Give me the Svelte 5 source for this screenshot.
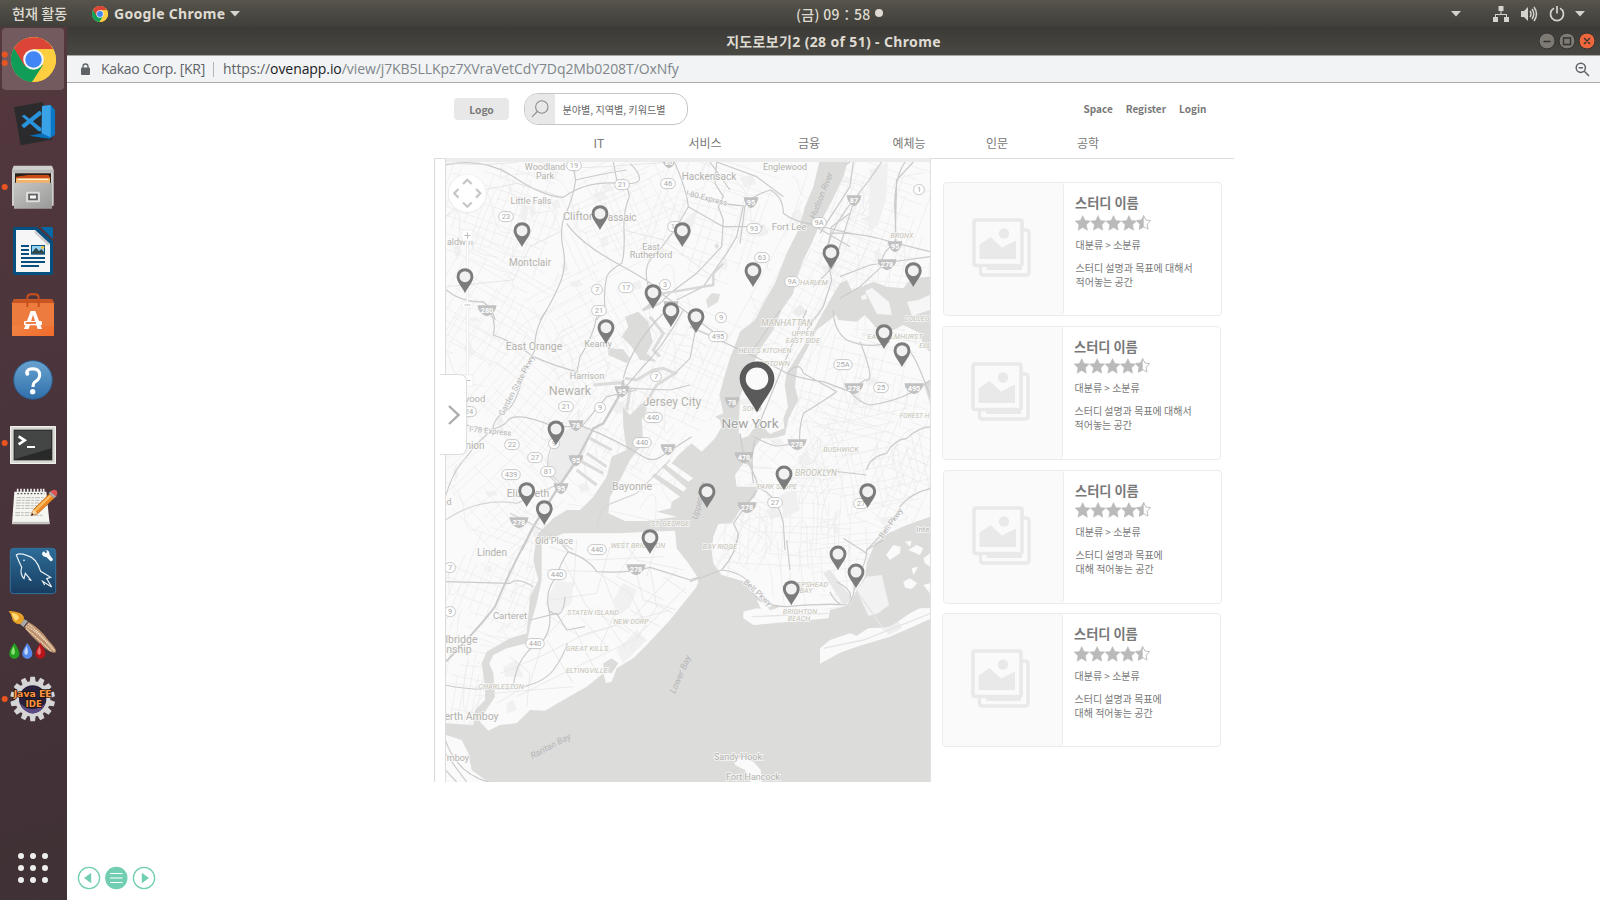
<script>
  // Deterministic street grid for the base map
  let seed = 11;
  const rnd = () => ((seed = (seed * 16807) % 2147483647) / 2147483647);
  const districts = [
    [500, 210, 130, 110, 20], [620, 215, 120, 110, -25], [710, 220, 110, 120, 18],
    [490, 310, 110, 120, 30], [590, 330, 110, 110, 62], [520, 400, 130, 110, 40],
    [625, 430, 110, 100, 30], [690, 370, 90, 120, 24], [500, 490, 120, 100, 48],
    [590, 560, 120, 100, 12], [500, 590, 110, 110, 22], [640, 600, 120, 110, 42],
    [560, 660, 110, 90, 60], [480, 690, 70, 110, 10], [800, 300, 90, 190, 28],
    [860, 220, 130, 140, 20], [900, 300, 90, 90, 5], [860, 380, 130, 120, 14],
    [800, 440, 110, 90, 40], [870, 460, 120, 110, -12], [790, 520, 130, 110, 3],
    [830, 570, 120, 90, -6], [740, 540, 60, 90, 30], [905, 470, 70, 140, 25]
  ];
  const streets = districts.map(([x, y, w, h, a]) => {
    let d = '';
    for (let u = -w / 2; u < w / 2; u += 5 + rnd() * 8) {
      const s = -h / 2 * rnd(), e = h / 2 * (.4 + rnd() * .6), k = rnd() * 6 - 3;
      d += `M${u.toFixed(1)} ${s.toFixed(1)}Q${(u + k).toFixed(1)} 0 ${(u + k / 2).toFixed(1)} ${e.toFixed(1)}`;
    }
    for (let v = -h / 2; v < h / 2; v += 5 + rnd() * 9) {
      const s = -w / 2 * rnd(), e = w / 2 * (.4 + rnd() * .6), k = rnd() * 8 - 4;
      d += `M${s.toFixed(1)} ${v.toFixed(1)}Q0 ${(v + k).toFixed(1)} ${e.toFixed(1)} ${(v + k / 2).toFixed(1)}`;
    }
    return { d, t: `translate(${x} ${y}) rotate(${a})` };
  });
  const lanes = Array.from({ length: 130 }, () => {
    const x = 440 + rnd() * 490, y = 155 + rnd() * 560, a = rnd() * 80 - 40, b = rnd() * 80 - 40;
    return `M${x.toFixed(1)} ${y.toFixed(1)}q${(a * .9).toFixed(1)} ${(b * .2).toFixed(1)} ${a.toFixed(1)} ${b.toFixed(1)}t${(b * .5).toFixed(1)} ${(a * .6).toFixed(1)}`;
  }).join('');
  const parks = Array.from({ length: 60 }, () => {
    const x = 446 + rnd() * 480, y = 165 + rnd() * 520, w = 3 + rnd() * 9, h = 3 + rnd() * 10;
    return `M${x.toFixed(1)} ${y.toFixed(1)}l${w.toFixed(1)} ${(-h * .4).toFixed(1)}l${(w * .4).toFixed(1)} ${h.toFixed(1)}l${(-w).toFixed(1)} ${(h * .4).toFixed(1)}z`;
  }).join('');

  // [text, x, y (baseline), size, kind, rotation]
  const places = [
    ['Woodland', 545, 169, 9], ['Park', 545, 178, 9], ['Little Falls', 531, 203, 9], ['Hackensack', 709, 179, 10],
    ['Englewood', 785, 169, 9], ['Clifton', 579, 219, 11], ['Passaic', 619, 220, 10], ['Montclair', 530, 265, 10],
    ['East', 651, 249, 9], ['Rutherford', 651, 257, 9], ['Fort Lee', 789, 229, 9.5], ['aldwin', 460, 244, 9],
    ['East Orange', 534, 349, 10.5], ['Kearny', 598, 346, 9], ['Harrison', 587, 378, 9], ['Newark', 570, 394, 12.5],
    ['Jersey City', 672, 405, 12], ['vood', 475, 401, 9.5], ['nion', 475, 448, 10], ['Elizabeth', 528, 496, 10.5],
    ['Bayonne', 632, 489, 10.5], ['Old Place', 554, 543, 9], ['d', 449, 504, 9], ['Linden', 492, 555, 10], ['Carteret', 510, 618, 9.5],
    ['lbridge', 461.5, 642, 10.5], ['nship', 459, 652, 10.5], ['erth Amboy', 471.5, 719, 10.5], ['mboy', 458, 760, 9],
    ['New York', 750, 427, 13.5, 'city'], ['Sandy Hook', 738, 759, 9], ['Fort Hancock', 753, 779, 9],
    ['MANHATTAN', 787, 325, 8.5, 'area'], ['UPPER', 803, 335, 7.2, 'area'], ['EAST SIDE', 803, 342, 7.2, 'area'],
    ["HELL'S KITCHEN", 765, 352, 7, 'area'], ['MIDTOWN', 773, 365, 7.2, 'area'], ['SOHO', 752, 410, 7, 'area'], ['HARLEM', 814, 284, 7, 'area'],
    ['BRONX', 902, 237, 7, 'area'], ['COLLEG', 917, 320, 6.8, 'area'], ['EAST ELMHURST', 895, 338, 7, 'area'], ['ELL', 925, 347, 7, 'area'],
    ['FOREST H', 914.5, 417, 6.4, 'area'], ['BUSHWICK', 841, 451, 7, 'area'], ['BROOKLYN', 816, 475, 8.5, 'area'],
    ['PARK SLOPE', 777, 488, 7, 'area'], ['BAY RIDGE', 720, 548, 7, 'area'], ['SHEEPSHEAD', 806, 586, 7, 'area'],
    ['BAY', 806, 592.5, 7, 'area'], ['BRIGHTON', 800, 613, 7, 'area'], ['BEACH', 799, 620, 7, 'area'],
    ['ST. GEORGE', 670, 525, 7, 'area'], ['WEST BRIGHTON', 638, 547, 7, 'area'], ['STATEN ISLAND', 593, 614, 7, 'area'],
    ['NEW DORP', 631, 623, 7, 'area'], ['GREAT KILLS', 587, 650, 7.2, 'area'], ['ELTINGVILLE', 587, 672, 7.2, 'area'],
    ['CHARLESTON', 501, 688, 7.2, 'area'],
    ['Hudson River', 824, 196, 8.5, 'sea', -68], ['Upper Bay', 702, 501, 8.5, 'sea', -76], ['Lower Bay', 683, 675, 9, 'sea', -66],
    ['Raritan Bay', 552, 748, 9, 'sea', -28], ['Garden State Pkwy', 519, 386, 8, 'road', -62], ['I-78 Express', 490, 433, 7.8, 'road', 6],
    ['I-80 Express', 706, 200, 7.8, 'road', 14], ['Belt Pkwy', 756, 594, 8, 'road', 42], ['Belt Pkwy', 893, 524, 8, 'road', -54],
    ['Inte', 923, 531, 8, 'road']
  ];
  const shields = [
    ['19', 574, 165], ['21', 622, 184], ['46', 668, 183], ['23', 506, 216], ['17', 675, 226], ['93', 754, 228], ['63', 762, 257],
    ['9A', 819, 222], ['9A', 792, 281], ['7', 597, 289], ['17', 626, 287], ['3', 665, 284], ['21', 599, 310], ['9', 721, 317],
    ['495', 718, 336], ['1', 919, 189], ['7', 656, 376], ['21', 566, 406], ['9', 600, 407], ['440', 653, 417], ['440', 642, 442],
    ['22', 512, 444], ['27', 535, 457], ['9', 554, 443], ['81', 548, 471], ['439', 511, 474], ['24', 469, 411], ['440', 597, 549],
    ['440', 557, 574], ['440', 535, 643], ['7', 450, 567], ['9', 450, 611], ['25A', 843, 364], ['25', 881, 387], ['27', 775, 502], ['27', 861, 503]
  ];
  const interstates = [
    ['280', 487, 310], ['95', 751, 202], ['80', 669, 162], ['95', 671, 306], ['87', 854, 200], ['95', 895, 246], ['278', 887, 264],
    ['95', 622, 391], ['78', 556, 427], ['78', 576, 425], ['95', 576, 460], ['95', 561, 488], ['78', 668, 449], ['278', 519, 522], ['278', 636, 569],
    ['78', 732, 402], ['278', 854, 388], ['495', 914, 388], ['278', 797, 444], ['478', 744, 457], ['278', 747, 507]
  ];
  const pins = [
    [522, 245.7], [600, 228.7], [682.3, 245.7], [753, 285.7], [831, 267.7], [465, 291.7], [653, 307.7], [671, 325.7],
    [696, 331.7], [606, 342.7], [913.3, 285.7], [884, 347.7], [902, 365.7], [556, 444], [526.7, 505.7], [544.3, 523.7],
    [784, 489], [707, 506.7], [867.7, 506.7], [650, 552.7], [791.3, 604], [838, 569], [856, 587]
  ];
  const cards = [
    { shift: 1, lines: ['스터디 설명과 목표에 대해서', '적어놓는 공간'] },
    { shift: 0, lines: ['스터디 설명과 목표에 대해서', '적어놓는 공간'] },
    { shift: 1, lines: ['스터디 설명과 목표에', '대해 적어놓는 공간'] },
    { shift: 0, lines: ['스터디 설명과 목표에', '대해 적어놓는 공간'] }
  ];
  const star = 'M7.5 0 9.8 4.800 15 5.500 11.200 9.200 12.200 14.600 7.500 12 2.800 14.600 3.800 9.200 0 5.500 5.200 4.800Z';
  const cogTeeth = Array.from({ length: 14 }, (_, i) => i * 360 / 14);
</script>

{#snippet chrome(size)}
  <svg width={size} height={size} viewBox="0 0 48 48">
    <circle cx="24" cy="24" r="24" fill="#fdce3f" />
    <path d="M3.2 12A24 24 0 0 0 22.5 48L34 30 24 24H14Z" fill="#109d58" />
    <path d="M3.2 12 14.500 31 24 24V13H45A24 24 0 0 0 3.200 12Z" fill="#dc4437" />
    <path d="M45.200 13H24L34.500 30 22.500 48A24 24 0 0 0 45.200 13Z" fill="#fdce3f" />
    <circle cx="24" cy="24" r="11" fill="#f2f4f6" /><circle cx="24" cy="24" r="8.800" fill="#4285f4" />
  </svg>
{/snippet}

{#snippet caret()}
  <svg width="10" height="6" viewBox="0 0 10 6"><path d="M0 0H10L5 5.500Z" fill="#d5d3ce" /></svg>
{/snippet}

<div class="screen">
  <header class="panel">
    <span class="activities">현재 활동</span>
    <span class="appmenu">{@render chrome(16)}<b>Google Chrome</b>{@render caret()}</span>
    <span class="clock"><span>(금) 09：58</span><i></i></span>
    <span class="tray">
      {@render caret()}
      <svg class="net" width="16" height="16" viewBox="0 0 16 16" fill="#d5d3ce"><path d="M5.5 0h5v5h-5zM0 11h5v5H0zM11 11h5v5h-5zM7.500 5h1v3H14v3h-1V9H3v2H2V8h5.500z" /></svg>
      <svg class="vol" width="17" height="16" viewBox="0 0 17 16"><path d="M0 5H3L7 1V15L3 11H0Z" fill="#d5d3ce" /><path d="M9 5Q11 8 9 11M11 3Q14.500 8 11 13M13 1Q18 8 13 15" fill="none" stroke="#d5d3ce" stroke-width="1.500" /></svg>
      <svg class="pow" width="16" height="16" viewBox="0 0 16 16" fill="none" stroke="#d5d3ce" stroke-width="1.700"><path d="M5 2.300A6.500 6.500 0 1 0 11 2.300M8 0V7.500" /></svg>
      {@render caret()}
    </span>
  </header>

  <div class="desk">
    <aside class="dock">
      <div class="slot active">{@render chrome(45)}</div>
      <div class="slot">
        <svg width="67" height="64" viewBox="0 211 201 192"><path d="M42 260 128 244 156 357 62 374Z" fill="#2b2b2d" /><path d="M126 256 152 253 165 268V342L147 355 125 346Z" fill="#0b78c6" /><path d="M126 256 152 253V350L125 338Z" fill="#3aa3e8" /><path d="M88 345 125 338 150 352 135 353Z" fill="#0a70bb" /><path d="M65 286 73 282 124 322V332H116ZM64 314 118 270 124 274V282L72 323Z" fill="#2994dc" /></svg>
      </div>
      <div class="slot">
        <svg width="67" height="64" viewBox="0 403 201 192"><defs><linearGradient id="cab" x2="1" y2="1"><stop stop-color="#c6c6c4" /><stop offset="1" stop-color="#999" /></linearGradient></defs><path d="M41 435H156L161 448V555H36V448Z" fill="#cfcfcd" /><path d="M38 447H160V456H38Z" fill="#b9b9b7" /><path d="M45 458H153V490H45Z" fill="#2c211b" /><path d="M48 468 85 463H145L150 470V490H48Z" fill="#cb4b16" /><path d="M48 473H150V490H48Z" fill="#f3b368" /><path d="M53 474H145V478H53Z" fill="#fff0d8" /><path d="M42 486H156V564H42Z" fill="url(#cab)" /><rect x="78" y="513" width="42" height="32" rx="5" fill="#dededc" /><rect x="84" y="519" width="30" height="20" fill="#777" /><rect x="88" y="523" width="22" height="12" fill="#f7f7f7" stroke="#333" stroke-width="2" /></svg>
      </div>
      <div class="slot">
        <svg width="67" height="64" viewBox="0 597 201 192"><path d="M44 621H110L159 664V760Q159 765 154 765H44Q39 765 39 760V626Q39 621 44 621Z" fill="#05507f" /><path d="M122 621H155Q159 621 159 626V657Z" fill="#0768a6" /><path d="M48 630H105L150 672V756H48Z" fill="#f6f6f6" /><path d="M105 630 150 672 143 676 103 638Z" fill="#ccc" /><path d="M63 678H87M63 690H87M63 702H87M63 714H135M63 726H135M63 738H117" stroke="#05507f" stroke-width="6" /><rect x="93" y="675" width="42" height="29" fill="#05507f" /><path d="M96 678H132V700H96Z" fill="#91d4f5" /><path d="M96 697 108 683 117 693 124 687 132 696V701H96Z" fill="#31474e" /><circle cx="128" cy="682" r="5" fill="#f0c23a" /></svg>
      </div>
      <div class="slot">
        <svg width="67" height="64" viewBox="0 789 201 192"><defs><linearGradient id="bag" y2="1"><stop stop-color="#ef9152" /><stop offset="1" stop-color="#f16b2c" /></linearGradient></defs><path d="M42 838H156L162 850V948H36V850Z" fill="url(#bag)" /><path d="M36 850 42 838H156L162 850Z" fill="#c9541f" /><path d="M36 850H162V918H36Z" fill="#ee7b3e" /><path d="M82 861V834Q82 823 93 823H105Q116 823 116 834V861" fill="none" stroke="#c94f1c" stroke-width="6" /><path d="M92 873H106L126 927H113L99 884 86 927H72Z" fill="#fff" /><rect x="72" y="903" width="54" height="13" rx="4" fill="#fff" /><path d="M77 909H108" stroke="#e96526" stroke-width="5" /></svg>
      </div>
      <div class="slot">
        <svg width="67" height="64" viewBox="0 21 201 192"><defs><linearGradient id="hlp" x2="0" y2="1"><stop stop-color="#69a3cf" /><stop offset="1" stop-color="#2f6fab" /></linearGradient></defs><circle cx="99" cy="120" r="58" fill="url(#hlp)" stroke="#2b5d8e" stroke-width="3" /><path d="M79 99Q82 86 99 86 119 87 119 104 119 117 107 124 99 129 99 141" fill="none" stroke="#fff" stroke-width="9" /><circle cx="82" cy="101" r="6" fill="#fff" /><circle cx="98" cy="155" r="8" fill="#fff" /></svg>
      </div>
      <div class="slot">
        <svg width="67" height="64" viewBox="0 213 201 192"><rect x="30" y="258" width="138" height="114" rx="3" fill="#d5d5d0" /><rect x="32" y="260" width="134" height="110" fill="none" stroke="#f6f6f3" stroke-width="3" /><rect x="41" y="269" width="116" height="92" fill="#282a29" /><path d="M44 272H154V325L44 358Z" fill="#444645" /><path d="M56 289 74 301 56 313" fill="none" stroke="#fff" stroke-width="8" /><path d="M81 321H105" stroke="#fff" stroke-width="6" /></svg>
      </div>
      <div class="slot">
        <svg width="67" height="64" viewBox="0 405 201 192"><path d="M43 455H139L149 552H36Z" fill="#f5f5f1" /><path d="M37 545H148V553H37Z" fill="#c5c5bf" /><path d="M50 473H133M49 481H125M48 489H120M48 497H111M47 505H107M46 518H95M46 526H128" stroke="#9b9b98" stroke-width="2" stroke-dasharray="14 3 8 3" /><path d="M53 446V460M63 446V460M73 446V460M83 446V460M93 446V460M103 446V460M113 446V460M123 446V460M131 446V460" stroke="#eee" stroke-width="5" /><path d="M52 461H133" stroke="#555" stroke-width="4" stroke-dasharray="5 5" /><path d="M93 527 101 508 149 461 163 474 113 521Z" fill="#ee8b24" stroke="#a95812" stroke-width="2" /><path d="M103 510 149 465 154 469 106 516Z" fill="#fbc067" /><path d="M93 527 101 508 112 520Z" fill="#f5d8a6" /><path d="M93 527 96 519 101 524Z" fill="#222" /><path d="M146 459 154 452 170 468 162 475Z" fill="#aaa" /><path d="M151 455Q161 445 170 452 175 461 167 469Z" fill="#dc5555" /></svg>
      </div>
      <div class="slot">
        <svg width="67" height="64" viewBox="0 597 201 192"><defs><linearGradient id="sql" x2="0" y2="1"><stop stop-color="#2d6c99" /><stop offset="1" stop-color="#183d60" /></linearGradient></defs><rect x="31" y="625" width="136" height="136" rx="10" fill="url(#sql)" stroke="#34719c" stroke-width="3" /><path d="M94 722 76 700 72 716Q59 702 65 682 54 658 49 645 57 638 80 646 109 652 122 694L152 712 140 716 155 741 128 724 134 735M94 722 86 717" fill="none" stroke="#e8f0f5" stroke-width="3.500" /><circle cx="72" cy="661" r="2.500" fill="#fff" /><path d="M126 643Q126 635 132 634L137 640 142 636 137 631Q148 630 149 644L159 658Q158 665 151 663L139 651Q129 653 126 643Z" fill="#f7fafc" /></svg>
      </div>
      <div class="slot">
        <svg width="67" height="64" viewBox="0 789 201 192"><path d="M26 813Q39 812 59 819 76 827 71 842L61 853Q37 851 36 833 33 821 26 813Z" fill="#e7a128" /><path d="M35 818Q56 822 57 835L48 843Q40 838 35 818Z" fill="#ffdc75" /><path d="M61 853 73 838 84 844 70 861Z" fill="#a8a9a7" /><path d="M73 862 86 846Q124 868 145 901 173 929 167 937 158 942 134 924 91 888 73 862Z" fill="#b98e6a" /><path d="M78 858Q118 877 161 932M84 851Q123 880 165 934M78 866Q108 890 153 934" fill="none" stroke="#f1d9bd" stroke-width="4" stroke-dasharray="4 2" />
          {#each [[43, '#25a020', '#8de276'], [82, '#5688ea', '#c0d8ff'], [121, '#b5151b', '#ef7068']] as [x, a, b]}<path d="M{x} 909Q{x + 30} 950 {x} 957 {x - 30} 950 {x} 909Z" fill={a} /><path d="M{x - 2} 919Q{x - 16} 942 {x - 3} 945 {x + 6} 940 {x - 2} 919Z" fill={b} />{/each}</svg>
      </div>
      <div class="slot">
        <svg width="67" height="64" viewBox="0 981 201 192">{#each cogTeeth as a}<path d="M89 1026 91 1010H105L107 1026Z" fill="#d5d5d5" transform="rotate({a} 98 1077)" />{/each}<circle cx="98" cy="1077" r="47" fill="#29213b" stroke="#d5d5d5" stroke-width="12" /><path d="M60 1090Q98 1125 136 1090 125 1120 98 1121 70 1118 60 1090Z" fill="#5c4a86" /><g class="ide"><text x="98" y="1071" textLength="114" lengthAdjust="spacingAndGlyphs">Java EE</text><text x="101" y="1101" textLength="49" lengthAdjust="spacingAndGlyphs">IDE</text></g></svg>
      </div>
      <div class="apps">{#each Array(9) as _}<i></i>{/each}</div>
      <svg class="marks" width="10" height="700" viewBox="0 0 10 700" fill="#e95420"><circle cx="4.700" cy="27.500" r="3" /><circle cx="4.700" cy="36" r="3" /><circle cx="4.700" cy="160" r="3" /><circle cx="4.700" cy="416" r="3" /><circle cx="4.700" cy="672" r="3" /></svg>
    </aside>

    <main class="window">
      <div class="titlebar"><b>지도로보기2 (28 of 51) - Chrome</b>
        <span class="controls">
          <svg width="56" height="18" viewBox="0 0 56 18"><circle cx="8" cy="9" r="8" fill="#7c7a72" stroke="#33322e" /><circle cx="28" cy="9" r="8" fill="#7c7a72" stroke="#33322e" /><circle cx="48" cy="9" r="8" fill="#ee663b" stroke="#33322e" /><path d="M4.500 9.500H11.500M24.500 6H31.500V12.500H24.500ZM45 6 51 12M51 6 45 12" fill="none" stroke="#34332f" stroke-width="1.300" /></svg>
        </span>
      </div>
      <div class="address">
        <svg width="9" height="12" viewBox="0 0 9 12"><path d="M2 5V3.500a2.500 2.500 0 0 1 5 0V5" fill="none" stroke="#5f6368" stroke-width="1.300" /><rect y="4.500" width="9" height="7.500" rx="1" fill="#5f6368" /></svg>
        <span class="corp">Kakao Corp. [KR]</span><i></i>
        <span class="url">https://<em>ovenapp.io</em><s>/view/j7KB5LLKpz7XVraVetCdY7Dq2Mb0208T/OxNfy</s></span>
        <svg class="mag" width="15" height="15" viewBox="0 0 15 15" fill="none" stroke="#5f6368" stroke-width="1.500"><circle cx="5.800" cy="5.800" r="4.600" /><path d="M9.300 9.300 14 14M3.700 5.800H8" /></svg>
      </div>

      <section class="page">
        <div class="mock">
          <div class="head">
            <span class="logo">Logo</span>
            <div class="search"><span class="lens"><svg width="18" height="18" viewBox="0 0 18 18" fill="none" stroke="#8d8d8d" stroke-width="1.100"><circle cx="10.800" cy="7" r="6.200" /><path d="M6.300 11.500 1 16.800" /></svg></span><span>분야별, 지역별, 키워드별</span></div>
            <nav class="links"><b>Space</b><b>Register</b><b>Login</b></nav>
          </div>
          <nav class="tabs"><span>IT</span><span>서비스</span><span>금융</span><span>예체능</span><span>인문</span><span>공학</span></nav>
          <div class="content">
            <div class="gutter"></div>
            <div class="map">
              <svg width="486" height="624" viewBox="445 158 486 624">
                <rect x="445" y="158" width="486" height="624" fill="#fafafa" />
                <path d={parks} fill="#f1f1f1" />
                <path d={lanes} fill="none" stroke="#ebebeb" stroke-width=".8" />
                {#each streets as s}<path d={s.d} transform={s.t} fill="none" stroke="#ebebeb" stroke-width=".65" />{/each}
                <path d="M556 436 570 428 590 428 586 450 576 466 561 482 550 478 547 466Z" fill="#ececec" />
                <path d="M523 206 529 206 525 222 520 219ZM690 215 698 208 694 224 685 232 680 225ZM870 170 888 162 886 200 878 225 868 232ZM780 495 796 490 800 510 784 518Z" fill="#f0f0f0" />

                <g transform="translate(690 310) scale(.33333)" fill="#dcdcdb">
                  <path d="M388-444H472L462-405 430-335 395-270 365-200 340-150 318-90 310-50 275 0 250 60 215 110 200 140 170 200 150 260 148 310 146 368 155 385 175 378 192 355 220 352 240 372 265 362 283 355 280 325 294 290 284 225 290 190 330 125 370 60 420-30 450-80 470-90 490-50 480-20 425 25 380 60 350 120 322 170 315 230 325 270 296 325 285 375 250 385 215 385 196 410 182 450 190 470 160 460 135 495 140 530 205 530 195 560 150 600 125 640 85 642 70 680 65 720 70 760 95 795 165 815 200 860 235 892 260 885 275 895 240 900 165 905 160 925 190 945 415 925 420 900 480 885 500 840 525 800 530 760 555 700 595 670 650 645 720 620V1416H-606L-655 1380-665 1330-685 1290-732 1275V1240L-650 1245-645 1200-615 1170-615 1130-625 1060-610 1025-540 985-490 970-480 860-455 810-470 750-462 690-455 670-410 625-370 600-330 600-290 560-250 500-235 440-190 420-200 350-202 290-180 315-135 270-130 300-145 330-140 400-180 450-205 500-240 560-245 610-180 640-40 620-100 605-58 595-55 575-30 560-115 498-105 490-20 545-10 535-85 470-75 462-5 515 10 505-55 460-35 435 5 400 35 425 75 385 95 350 90 330 75 320 100 310 88 255 103 200 118 150 150 65 195 30 220-20 255-80 290-170 325-240 345-310 370-370Z" />
                  <path d="M-195 20-155 5-125 35-112 95-130 130-100 155-150 150-175 110-205 80-185 50ZM-245 115-200 118-180 145-190 160-245 135ZM430 0 445 30 500 35 525 15 560 55 600 65 640 45 690 70 700 110 720 125V-100L665-95 640-65 590-70 550-85 490-60 475-20ZM700 220 720 210V280Z" />
                </g>
                <g transform="translate(430 310) scale(.33333)" fill="none" stroke="#dcdcdb" stroke-width="9">
                  <path d="M590 300 600 240 575 218 490 225M650 275 680 225 735 190 700 175 670 180 620 210 585 205M690 140 670 120 700 70 660 20" />
                  <path d="M740 640 460 640" stroke-width="14" />
                  <path d="M480 385 545 420M470 430 530 470M455 455 520 490M440 480 500 525" />
                </g>
                <path d="M706 300 712 293 720 294 718 302 708 308ZM714 246 717 243 719 246 717 249Z" fill="#dfdfde" />

                <!-- Staten Island and the outer shores -->
                <g transform="translate(430 540) scale(.33333)">
                  <path d="M335 10 400-20 560-20 735-28 740 25 775 70 805 115 800 140 720 240 650 315 610 355 560 385 545 425 528 430 520 400 470 440 400 480 345 512 300 510 260 550 210 555 175 572 150 545 165 515 195 470 190 400 178 370 190 345 230 325 290 310 303 250 320 190 335 120Z" fill="#fafafa" />
                  <path d="M520 370 545 355 565 370 545 400 520 395Z" fill="#dcdcdb" />
                  <path d="M380 120 430 130 425 190 370 230 345 190ZM550 180 580 130 620 150 600 200 570 225ZM220 380 260 360 280 410 225 410ZM560 330 620 270 650 300 580 370ZM230 490 250 480 260 510 230 520Z" fill="#f1f1f1" />
                  <path d="M345 90 500 95 600 160 650 260M400 60 470 200 600 280M360 230 450 290 640 230M210 400 330 350 470 280 720 210M260 470 420 390 610 300 780 130M200 490 300 430 340 300 410 220M520 110 560 210 510 320M620 100 640 180 740 210M660 80 680 200 600 330M740 90 610 230M240 350 300 400 290 500M350 300 430 430M430 260 500 400M190 460 430 440M540 20 500 160 360 180M620 20 560 110 700 180M680 10 650 110M360 20 480 60 700 50M440 0 430 140M580 0 620 60 760 90M450 230 540 330M500 200 590 330M560 240 640 300M600 210 690 260M650 180 730 220M700 110 770 160" fill="none" stroke="#e7e7e7" stroke-width="2.500" />
                </g>
                <g transform="translate(690 540) scale(.33333)" fill="#fafafa">
                  <path d="M160 215 200 205 240 212 270 200 415 210 417 232 300 240 190 255 185 240 160 232ZM390 325 420 300 480 280 500 287 535 265 600 262 660 220 690 205 722 205V236L600 290 500 320 450 338 390 371ZM135 655 160 655 190 665 212 690 215 727H182L165 690 135 675ZM588 45 610 15 632 20 630 40 600 60ZM640 125 660 115 682 130 665 147 645 143ZM655 30 680 15 700 25 690 45ZM665 85 685 80 670 105ZM700 55 720 40V80L705 70ZM700 135 720 130V160ZM645 5 665 2 660 20ZM200 180 222 190 240 210 215 210ZM-25 50 0 95 25 130-10 160Z" />
                  <path d="M500 150 530 110 575 105 597 195 565 220 535 228Z" fill="#f2f2f2" />
                  <path d="M400 100 420 90 490 180 460 195Z" fill="#e7e7e7" />
                  <path d="M583 267 625 245 637 265 595 285Z" fill="#eee" />
                  <path d="M495 145 583 270M400 325 520 300 722 220M185 230 415 220" fill="none" stroke="#e5e5e5" stroke-width="4" />
                </g>
                <path d="M865 291 872 288 889 302 892 315 877 314ZM861 296 866 294 867 299 862 300ZM907 302 918 300 930 295V310L912 316Z" fill="#f6f6f6" />
                <path d="M792 312 800 304 807 312 798 317Z" fill="#ececec" />

                <!-- Highways -->
                <g fill="none" stroke="#cbcbcb" stroke-width="3.600" stroke-linejoin="round">
                  <g transform="translate(430 80) scale(.33333)">
                    <path d="M46 255Q160 230 250 290T400 352Q470 300 570 310T600 250M430 265 437 300Q430 350 410 395 385 440 400 510 410 560 390 610 360 680 330 720M550 246 560 300Q595 310 598 350 580 390 582 450 585 520 575 550 540 570 530 590 520 640 525 680L500 720M437 300Q520 280 590 270M410 430Q450 490 570 555T700 645L850 755M735 250Q770 330 775 380 720 480 660 540 640 570 655 620M775 340Q840 370 945 378L930 490M945 378Q960 350 1020 330 1060 350 1060 400 1090 425 1155 435L1260 460M860 246 855 310 880 350 865 380 880 420 875 500 800 580 720 640 690 670M860 246 980 290 1060 350M940 378 920 470 890 520 820 620 740 660M1245 255 1260 246M1260 400 1205 440 1190 520 1205 600 1180 680 1130 750M900 330 840 246M48 630Q100 670 160 665 190 690 195 720M775 380 880 440 1000 440M1140 430 1260 500" />
                    <path d="M48 250Q200 260 300 240 400 270 530 260L720 246M48 410 160 330 260 310 400 352M400 450 300 500 250 600 48 620M580 450 700 480 860 600" stroke="#dedede" stroke-width="2" />
                    <path d="M690 670 640 690 700 640 850 615 850 580 880 550" stroke="#d7d7d7" stroke-width="7" />
                  </g>
                  <g transform="translate(840 80) scale(.33333)">
                    <path d="M-30 460Q60 455 150 485L270 515M125 246Q90 300 45 355-20 430-40 510M195 246Q160 300 165 400T165 490Q120 520 125 560L60 620 0 655M0 590 90 555 270 530M220 246 170 300 165 500M40 246 30 320-60 460M-80 620-20 560 40 370" />
                  </g>
                  <g transform="translate(430 310) scale(.33333)">
                    <path d="M175 0Q200 30 190 75 260 100 310 140 380 170 440 185M350 0Q310 60 315 120 290 160 270 230T215 310Q185 340 190 360 150 385 110 440 70 480 46 560M110 345Q200 380 240 325 280 310 370 350M370 350 460 350Q560 390 640 440 670 460 700 435L785 380M500 20Q490 80 450 140L440 190M760 0Q700 110 630 180 590 230 560 260M620 240 530 260 480 320 455 350M735 190 780 145 800 40M580 205Q600 120 680 30L730-20M600 235 720 240 780 225" />
                    <path d="M580 210 575 245 520 340 490 355 440 450 380 540 310 650 275 720" stroke-width="7" />
                    <path d="M365 400 355 440 350 490 380 520M390 520 360 490M46 630Q150 560 260 580L390 520M240 610Q310 640 430 720M620 550 520 590 500 650M620 550 720 450" stroke="#d7d7d7" />
                  </g>
                  <g transform="translate(690 310) scale(.33333)">
                    <path d="M0 50Q70 80 130 110 220 150 290 190 350 210 400 215L480 245Q510 280 540 285 650 270 722 210M290 190Q330 150 340 190L440 245Q420 260 340 310 325 360 330 400L260 408M430 0Q430 60 470 90 540 120 600 95M510 95Q560 220 525 210L480 240M640 100Q670 130 690 180L722 260M150 370 160 430Q200 500 205 535L130 640 145 670Q145 710 110 720M205 535Q260 550 280 640L285 720M190 380Q250 410 260 408M530 480Q540 440 590 430 610 390 650 385 690 350 722 350M722 535Q660 550 630 590 620 630 530 720M190 520Q180 440 195 390M400 480 530 495M270 0 190 120M350 0 270 190 200 360" />
                  </g>
                  <g transform="translate(430 540) scale(.33333)">
                    <path d="M290 0Q240 90 195 200 150 260 48 365" stroke-width="6" />
                    <path d="M415 35Q480 60 500 95 600 100 660 82 720 100 780 120L805 112M385 0 415 35Q390 70 380 110 345 150 355 200 370 260 340 300 260 340 250 440M46 435Q130 455 260 445 340 430 370 390 400 350 412 310M46 125 240 130Q260 110 310 140M355 210Q400 250 405 170M300 240 380 220 410 270 465 260M46 600Q80 700 175 726M46 640 110 726M46 690 80 726" />
                  </g>
                  <g transform="translate(690 540) scale(.33333)"><path d="M145-20Q140 40 95 90 40 110 0 125M95 90Q180 100 190 160 220 200 290 200 400 190 475 195 500 160 490 120 530 80 530 30L580 0M290 0 300 90M460-5 530 40M420 155Q430 180 455 195M440 125Q490 150 480 175" /></g>
                </g>

                <g transform="translate(0 .6)">
                  {#each shields as [n, x, y]}
                    <rect x={x - 3.500 - n.length * 1.900} y={y - 5} width={7 + n.length * 3.800} height="10" rx="4.800" fill="#fff" stroke="#c2c2c2" stroke-width=".9" />
                    <text class="num" {x} y={y + 2.700}>{n}</text>
                  {/each}
                  {#each interstates as [n, x, y]}
                    <path d="M{x - 3 - n.length * 2.200} {y - 5.300}h{6 + n.length * 4.400}q-1 8.500-{3 + n.length * 2.200} 11-{2 + n.length * 2.200}-2.500-{3 + n.length * 2.200}-11z" fill="#c1c1c1" />
                    <text class="num inv" {x} y={y + 2.500}>{n}</text>
                  {/each}
                  {#each places as [t, x, y, s, kind = 'town', r = 0]}
                    <text class="place {kind}" {x} {y} font-size={s} transform="rotate({r} {x} {y})">{t}</text>
                  {/each}
                </g>

                <!-- Pan and zoom controls -->
                <g fill="#fff"><circle cx="467.300" cy="193.700" r="19.500" fill="#eee" /><circle cx="467.300" cy="193.300" r="18.500" /><path d="M466.500 239V382h2V239z" stroke="#e4e4e4" stroke-width=".6" /><path d="M462 230h11v11h-11zM462 302h11v6h-11zM462 375h11v11h-11z" stroke="#eaeaea" stroke-width=".7" /></g>
                <path d="M463 184 467.300 179.700 471.600 184M463 202.500 467.300 206.800 471.600 202.500M458.500 189 454.200 193.300 458.500 197.600M476 189 480.300 193.300 476 197.600" fill="none" stroke="#c6c6c6" stroke-width="2.200" />
                <path d="M464.500 235.500h6M467.500 232.500v6M464.500 305h6M464.500 380.500h6" stroke="#bdbdbd" />

                {#each pins as [x, y]}
                  <path transform="translate({x} {y + 1.300})" d="M0 0C-3-6-8.400-11.500-8.400-16.600A8.400 8.200 0 0 1 8.400-16.600C8.400-11.500 3-6 0 0Z" fill="#7c7c7c" />
                  <circle cx={x} cy={y - 15} r="5.500" fill="#fafafa" fill-opacity=".93" />
                {/each}
                <path transform="translate(757 412.500)" d="M0 0C-6-12-17.400-23-17.400-34A17.400 17 0 0 1 17.400-34C17.400-23 6-12 0 0Z" fill="#5a5a5a" />
                <circle cx="757" cy="378.700" r="11.300" fill="#fafafa" />
                <path d="M445 158H931V162H445Z" fill="#ececec" />
                <path d="M445.500 158V782M930.700 158V782" stroke="#dcdcdc" />
              </svg>
              <button class="drawer" aria-label="펼치기"><svg width="12" height="20" viewBox="0 0 12 20"><path d="M1 1 10.500 10 1 19" fill="none" stroke="#adadad" stroke-width="2.400" /></svg></button>
            </div>
            <div class="list">
              {#each cards as c}
                <article class="card" class:nudged={c.shift}>
                  <div class="thumb"><svg width="59" height="59" viewBox="0 0 59 59"><path d="M8.500 48V54Q8.500 57 11.500 57H54Q57 57 57 54V15Q57 12 54 12H50" fill="none" stroke="#e9e9e9" stroke-width="3.400" /><rect x="2" y="2" width="48" height="45.500" rx="2" fill="#fafafa" stroke="#e9e9e9" stroke-width="3.600" /><path d="M15 47.500H50V52H15Z" fill="#e9e9e9" /><path d="M7.500 41V26.500L18.500 19 30 29.500 44 22.500V41Z" fill="#e9e9e9" /><circle cx="32" cy="15.500" r="5.200" fill="#e9e9e9" /></svg></div>
                  <div class="info">
                    <h3>스터디 이름</h3>
                    <svg class="stars" width="77" height="16" viewBox="0 0 77 16">{#each [0, 1, 2, 3] as i}<path d={star} fill="#bababa" stroke="#bababa" stroke-width=".5" transform="translate({i * 15.400 + .2} .6)" />{/each}<path d={star} fill="none" stroke="#bababa" transform="translate(61.700 .5) scale(.93)" /><path d="M7.500 0V12L2.800 14.600 3.800 9.200 0 5.500 5.200 4.800Z" fill="#bababa" transform="translate(61.200 .2)" /></svg>
                    <p class="cat">대분류 &gt; 소분류</p>
                    <p class="desc">{#each c.lines as l}<span>{l}</span>{/each}</p>
                  </div>
                </article>
              {/each}
            </div>
          </div>
        </div>
        <div class="pager">
          <svg width="79" height="24" viewBox="0 0 79 24" fill="#72ceb2"><circle cx="12" cy="12" r="10.600" fill="#fff" stroke="#72ceb2" stroke-width="1.300" /><path d="M7 12 14.200 6.700V17.300Z" /><circle cx="39.300" cy="12" r="11.200" /><path d="M33 7.500H45.500M33 12H45.500M33 16.500H45.500" stroke="#fff" stroke-width="1.200" /><circle cx="67" cy="12" r="10.600" fill="#fff" stroke="#72ceb2" stroke-width="1.300" /><path d="M72 12 64.800 6.700V17.300Z" /></svg>
        </div>
      </section>
    </main>
  </div>
</div>

<style>
  :global(body) { overflow: hidden; }
  .screen { width: 1600px; height: 900px; display: flex; flex-direction: column; background: #fff; font-family: "Noto Sans", "Noto Sans CJK KR", sans-serif; }
  svg { display: block; flex: none; }
  .panel { height: 27px; flex: none; display: flex; align-items: center; background: linear-gradient(#56544b, #3f3e39); color: #dfdbd2; font-size: 14px; }
  .activities { width: 80px; padding-left: 12px; font-family: "Noto Sans CJK KR", sans-serif; font-size: 14.200px; font-weight: 500; white-space: nowrap; margin-top: -1px; }
  .appmenu { width: 704px; display: flex; align-items: center; }
  .appmenu b { font-size: 14px; letter-spacing: .3px; margin: 0 6px; width: 110px; white-space: nowrap; }
  .clock { width: 640px; display: flex; align-items: center; font-family: "Noto Sans CJK KR", sans-serif; font-weight: 500; letter-spacing: .3px; white-space: nowrap; padding: 1px 0 0 4px; box-sizing: border-box; }
  .clock span { margin-left: -4px; }
  .clock i { width: 8px; height: 8px; border-radius: 50%; background: #dfdbd2; margin: -3px 0 0 4px; }
  .tray { display: flex; align-items: center; margin-left: 15px; }
  .net { margin-left: 32px; } .vol { margin-left: 12px; } .pow { margin: 0 10px 0 11px; }
  .desk { flex: 1; display: flex; min-height: 0; }
  .dock { width: 67px; flex: none; display: flex; flex-direction: column; position: relative; background: linear-gradient(165deg, #54383e, #4a343b 45%, #3f3135); }
  .slot { height: 64px; flex: none; display: flex; justify-content: center; align-items: center; }
  .slot.active { height: 62px; margin: 1px 3px 1px 2px; border-radius: 4px; background: #725a5f; }
  .marks { position: absolute; left: 0; top: 0; }
  .ide text { font: bold 28px "DejaVu Sans", sans-serif; text-anchor: middle; fill: #ff9540; stroke: #1c100b; stroke-width: 4px; paint-order: stroke; }
  .apps { margin: auto 0 17px 18px; display: grid; grid-template-columns: repeat(3, 6px); gap: 6px; }
  .apps i { width: 6px; height: 6px; border-radius: 50%; background: #eeeeec; }
  .window { flex: 1; display: flex; flex-direction: column; min-width: 0; }
  .titlebar { height: 28px; flex: none; display: grid; grid-template-columns: 1fr auto 1fr; align-items: center; background: linear-gradient(#3b3a36, #4a4842); color: #dfdbd2; font-size: 14px; }
  .titlebar b { grid-column: 2; letter-spacing: .35px; }
  .controls { justify-self: end; padding-right: 5px; }
  .address { height: 28px; flex: none; box-sizing: border-box; border-top: 1px solid #a6a6a4; border-bottom: 1px solid #aaa; background: #f1f3f4; display: flex; align-items: center; padding: 0 10px 0 14px; font: 14px "Open Sans", sans-serif; color: #5f6368; white-space: nowrap; }
  .corp { margin: -2px 0 0 11px; width: 104px; letter-spacing: -.3px; }
  .address i { width: 1px; height: 15px; background: #b4b7ba; margin: 0 9px 0 8px; }
  .url { margin-top: -2px; letter-spacing: -.08px; }
  .url em { font-style: normal; color: #202124; } .url s { text-decoration: none; color: #80868b; }
  .mag { margin-left: auto; }
  .page { flex: 1; display: flex; flex-direction: column; justify-content: space-between; font-family: "Noto Sans CJK KR", sans-serif; color: #787878; }
  .mock { margin-left: 367px; width: 800px; }
  .head { height: 48px; display: flex; align-items: center; padding: 4px 0 0 20px; box-sizing: border-box; }
  .logo { width: 55px; height: 22px; line-height: 24px; margin-right: 15px; border-radius: 4px; background: #e8e8e8; text-align: center; font-size: 10.300px; font-weight: 700; }
  .search { width: 164px; height: 32px; box-sizing: border-box; border: 1px solid #c5c5c5; border-radius: 14px; overflow: hidden; display: flex; align-items: center; gap: 7.500px; font-size: 10.100px; color: #686868; white-space: nowrap; }
  .lens { width: 30px; height: 32px; background: #e8e8e8; display: grid; place-items: center; }
  .links { margin-left: 395.500px; display: flex; gap: 13px; font-size: 10px; line-height: 18px; }
  .tabs { height: 27px; display: flex; font-size: 12px; line-height: 23px; padding-left: 159.500px; box-sizing: border-box; }
  .tabs span { white-space: nowrap; }
  .tabs span:nth-child(1) { width: 95px; } .tabs span:nth-child(2) { width: 109.500px; } .tabs span:nth-child(3) { width: 94.500px; } .tabs span:nth-child(4) { width: 93.500px; } .tabs span:nth-child(5) { width: 91px; }
  .content { display: flex; border-top: 1px solid #dcdcdc; height: 623px; }
  .gutter { width: 10px; border-left: 1px solid #d8d8d8; }
  .map { position: relative; width: 486px; margin-top: -1px; height: 624px; }
  .drawer { position: absolute; left: -5px; top: 216px; width: 27px; height: 81px; box-sizing: border-box; border: 1px solid #dedede; border-left: 0; border-radius: 0 7px 7px 0; background: #fff; display: grid; place-items: center; padding: 0 0 0 2px; }
  .place { font-family: Roboto, sans-serif; text-anchor: middle; fill: #b4b2ad; stroke: #fafafa; stroke-width: 1.800px; stroke-opacity: .75; paint-order: stroke; }
  .place.city { fill: #a4a3a0; }
  .place.area { font-style: italic; fill: #c4c1b3; letter-spacing: .15px; }
  .place.sea { stroke: none; fill: #b6b6b6; font-style: italic; }
  .place.road { fill: #b4b4b4; }
  .num { font: 7.500px Roboto, sans-serif; fill: #a9a9a9; text-anchor: middle; }
  .num.inv { fill: #fff; font-size: 7.300px; font-weight: 700; }
  .list { padding: 23px 0 0 11px; display: flex; flex-direction: column; gap: 9.800px; }
  .card { width: 279px; height: 134px; box-sizing: border-box; border: 1px solid #ebebeb; border-radius: 4px; display: flex; }
  .card.nudged { margin-left: 1px; }
  .thumb { width: 118.500px; border-right: 1px solid #ebebeb; border-radius: 4px; background: #fafafa; display: grid; place-items: center; padding-bottom: 3px; }
  .thumb svg { margin-right: 3px; }
  .info { padding: 10px 0 0 12px; }
  .info h3 { margin: 0 0 0 -.5px; font-size: 13.200px; line-height: 20px; }
  .stars { margin: 1.500px 0 0 -1px; }
  .info p { margin: 0; font-size: 10px; line-height: 14px; white-space: nowrap; }
  .info .cat { margin: 7px 0 9px; }
  .desc span { display: block; }
  .pager { margin: 0 0 10px 10px; }
</style>
